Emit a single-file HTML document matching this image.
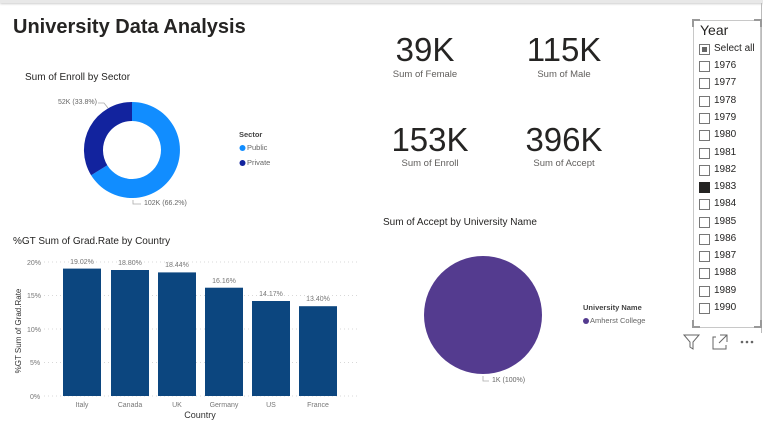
<!DOCTYPE html>
<html><head><style>
body{margin:0;width:763px;height:430px;background:#fff;position:relative;overflow:hidden;font-family:"Liberation Sans",sans-serif;}
.a{position:absolute;white-space:nowrap;}
.kpi{position:absolute;font-size:33px;color:#252423;text-align:center;width:140px;}
.kl{position:absolute;font-size:9.5px;color:#605e5c;text-align:center;width:140px;}
.cb{position:absolute;left:699px;width:9px;height:9px;border:1px solid #777;background:#fff;}
.yl{position:absolute;left:714px;font-size:10px;color:#252423;}
</style></head><body>
<div class="a" style="left:0;top:0;width:763px;height:3px;background:#e8e8e8;box-shadow:0 1px 2px #ccc"></div>
<div class="a" style="left:761px;top:3px;width:1px;height:330px;background:#bbb"></div>
<div class="a" style="left:13px;top:16px;font-size:20px;font-weight:bold;color:#252423">University Data Analysis</div>
<div class="a" style="left:25px;top:72px;font-size:10px;color:#252423">Sum of Enroll by Sector</div>
<svg class="a" style="left:0;top:0" width="380" height="220">
<path d="M132 102 A48 48 0 1 1 91.1 175.2 L107.3 165.2 A29 29 0 1 0 132 121Z" fill="#118dff"/>
<path d="M91.1 175.2 A48 48 0 0 1 132 102 L132 121 A29 29 0 0 0 107.3 165.2Z" fill="#12239e"/>
<polyline points="98,103 104,103 108,108" fill="none" stroke="#aaa" stroke-width="0.8"/>
<polyline points="133,200 133,204 141,204" fill="none" stroke="#aaa" stroke-width="0.8"/>
<circle cx="242.5" cy="148" r="3" fill="#118dff"/><circle cx="242.5" cy="163" r="3" fill="#12239e"/>
</svg>
<div class="a" style="left:58px;top:99px;font-size:7px;color:#666">52K (33.8%)</div>
<div class="a" style="left:144px;top:200px;font-size:7px;color:#666">102K (66.2%)</div>
<div class="a" style="left:239px;top:130px;font-size:7.5px;font-weight:bold;color:#444">Sector</div>
<div class="a" style="left:247px;top:143px;font-size:7.5px;color:#666">Public</div>
<div class="a" style="left:247px;top:158px;font-size:7.5px;color:#666">Private</div>

<div class="kpi" style="left:355px;top:31px">39K</div><div class="kl" style="left:355px;top:69px">Sum of Female</div>
<div class="kpi" style="left:494px;top:31px">115K</div><div class="kl" style="left:494px;top:69px">Sum of Male</div>
<div class="kpi" style="left:360px;top:121px">153K</div><div class="kl" style="left:360px;top:158px">Sum of Enroll</div>
<div class="kpi" style="left:494px;top:121px">396K</div><div class="kl" style="left:494px;top:158px">Sum of Accept</div>

<div class="a" style="left:13px;top:236px;font-size:10px;color:#252423">%GT Sum of Grad.Rate by Country</div>
<svg class="a" style="left:0;top:220px" width="380" height="210" font-family="Liberation Sans" font-size="7" fill="#777">
<g stroke="#ccc" stroke-dasharray="1,3" stroke-width="0.8">
<line x1="44" y1="42" x2="357" y2="42"/><line x1="44" y1="75.5" x2="357" y2="75.5"/><line x1="44" y1="109" x2="357" y2="109"/><line x1="44" y1="142.5" x2="357" y2="142.5"/><line x1="44" y1="176" x2="357" y2="176"/>
</g>
<text x="27" y="45">20%</text><text x="27" y="78">15%</text><text x="27" y="112">10%</text><text x="30" y="145">5%</text><text x="30" y="179">0%</text>
<g fill="#0c467f">
<rect x="63" y="48.6" width="38" height="127.4"/><rect x="111" y="50" width="38" height="126"/><rect x="158" y="52.4" width="38" height="123.6"/><rect x="205" y="67.7" width="38" height="108.3"/><rect x="252" y="81" width="38" height="95"/><rect x="299" y="86.2" width="38" height="89.8"/>
</g>
<g text-anchor="middle">
<text x="82" y="44">19.02%</text><text x="130" y="45">18.80%</text><text x="177" y="47">18.44%</text><text x="224" y="63">16.16%</text><text x="271" y="76">14.17%</text><text x="318" y="81">13.40%</text>
<text x="82" y="187">Italy</text><text x="130" y="187">Canada</text><text x="177" y="187">UK</text><text x="224" y="187">Germany</text><text x="271" y="187">US</text><text x="318" y="187">France</text>
<text x="200" y="198" font-size="9" fill="#333">Country</text>
</g>
<text transform="translate(21,111) rotate(-90)" text-anchor="middle" font-size="8" fill="#333">%GT Sum of Grad.Rate</text>
</svg>

<div class="a" style="left:383px;top:217px;font-size:10px;color:#252423">Sum of Accept by University Name</div>
<svg class="a" style="left:380px;top:200px" width="300" height="200">
<circle cx="103" cy="115" r="59" fill="#543b8f"/>
<polyline points="103,176 103,181 109,181" fill="none" stroke="#aaa" stroke-width="0.8"/>
<circle cx="206" cy="121" r="3" fill="#543b8f"/>
</svg>
<div class="a" style="left:583px;top:303px;font-size:7.5px;font-weight:bold;color:#444">University Name</div>
<div class="a" style="left:590px;top:316px;font-size:7.5px;color:#666">Amherst College</div>
<div class="a" style="left:492px;top:377px;font-size:7px;color:#666">1K (100%)</div>

<div class="a" style="left:693px;top:20px;width:66px;height:306px;border:1px solid #c8c8c8"></div>
<div class="a" style="left:692px;top:19px;width:6px;height:6px;border-left:2px solid #999;border-top:2px solid #999"></div>
<div class="a" style="left:754px;top:19px;width:6px;height:6px;border-right:2px solid #999;border-top:2px solid #999"></div>
<div class="a" style="left:692px;top:320px;width:6px;height:6px;border-left:2px solid #999;border-bottom:2px solid #999"></div>
<div class="a" style="left:754px;top:320px;width:6px;height:6px;border-right:2px solid #999;border-bottom:2px solid #999"></div>
<div class="a" style="left:700px;top:22px;font-size:14px;color:#252423">Year</div>
<div class="cb" style="top:44px"><div style="margin:2px;width:5px;height:5px;background:#666"></div></div>
<div class="yl" style="top:43px">Select all</div>
<div class="cb" style="top:61px"></div><div class="yl" style="top:60px">1976</div>
<div class="cb" style="top:78px"></div><div class="yl" style="top:77px">1977</div>
<div class="cb" style="top:96px"></div><div class="yl" style="top:95px">1978</div>
<div class="cb" style="top:113px"></div><div class="yl" style="top:112px">1979</div>
<div class="cb" style="top:130px"></div><div class="yl" style="top:129px">1980</div>
<div class="cb" style="top:148px"></div><div class="yl" style="top:147px">1981</div>
<div class="cb" style="top:165px"></div><div class="yl" style="top:164px">1982</div>
<div class="cb" style="top:182px;background:#252423;border-color:#252423"></div><div class="yl" style="top:181px">1983</div>
<div class="cb" style="top:199px"></div><div class="yl" style="top:198px">1984</div>
<div class="cb" style="top:217px"></div><div class="yl" style="top:216px">1985</div>
<div class="cb" style="top:234px"></div><div class="yl" style="top:233px">1986</div>
<div class="cb" style="top:251px"></div><div class="yl" style="top:250px">1987</div>
<div class="cb" style="top:268px"></div><div class="yl" style="top:267px">1988</div>
<div class="cb" style="top:286px"></div><div class="yl" style="top:285px">1989</div>
<div class="cb" style="top:303px"></div><div class="yl" style="top:302px">1990</div>
<svg class="a" style="left:680px;top:332px" width="83" height="20" fill="none" stroke="#666" stroke-width="1">
<path d="M4 3 H19 L13 10 V17 L10 15 V10 Z"/>
<path d="M36 5 H33 V17 H46 V13 M40 3 H47 V10 M47 3 L39 11"/>
<circle cx="62" cy="10" r="0.8" fill="#666"/><circle cx="67" cy="10" r="0.8" fill="#666"/><circle cx="72" cy="10" r="0.8" fill="#666"/>
</svg>
</body></html>
